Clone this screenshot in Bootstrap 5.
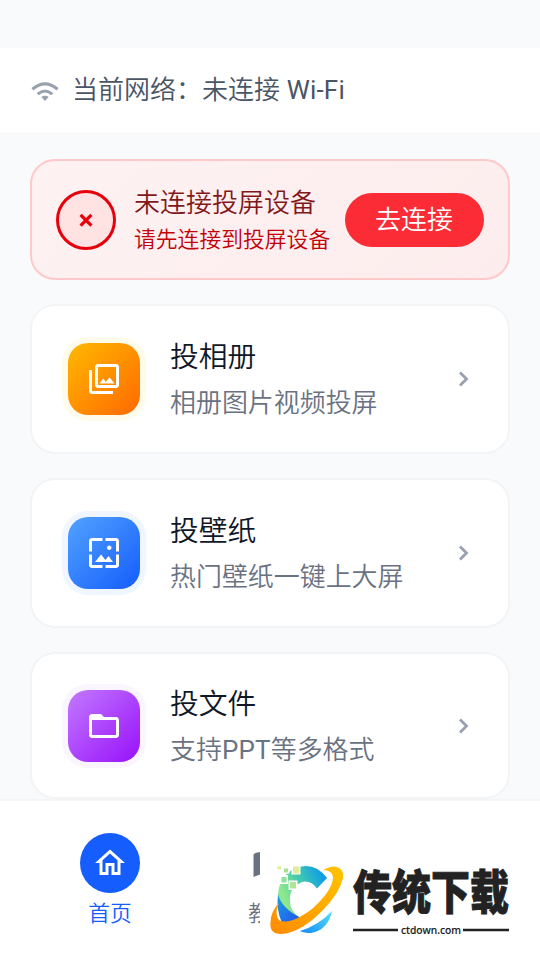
<!DOCTYPE html>
<html lang="zh-CN">
<head>
<meta charset="utf-8">
<meta name="viewport" content="width=device-width, initial-scale=1">
<title>投屏</title>
<link href="https://cdn.jsdelivr.net/npm/bootstrap@5.3.0/dist/css/bootstrap.min.css" rel="stylesheet">
<style>
body{font-family:"Noto Sans CJK SC",sans-serif;font-weight:350;background:#f9fafc;height:960px;overflow:hidden;letter-spacing:0}
.latin{font-family:Roboto,sans-serif;font-weight:400;letter-spacing:.2px}
.net-bar{margin-top:48px;height:86px;padding-left:29px;background:#fff;border-bottom:1px solid #f3f4f6;color:#4a5565;font-size:26px;line-height:1}
.net-bar span.net-name{margin-left:11px;padding-bottom:3px}
.page-main{padding:25px 30px 0;height:665px}
.device{height:121px;border:2px solid #ffc9c9;border-radius:25px;background:linear-gradient(135deg,#fef2f2,#fceced);padding:0 24px}
.ring-x{width:60px;height:60px;border:3px solid #e7000b;background:#ffe2e2;margin-right:18px}
.t-a{font-size:26px;line-height:36px;color:#82181a}
.t-b{font-size:21.8px;line-height:38px;color:#c10007;white-space:nowrap}
.go{width:139px;height:54px;background:#fb2c36;color:#fff;font-size:26px;line-height:1;font-weight:350;padding:0 1px 3px 0}
.entry{height:150px;border:2px solid #f3f4f6;border-radius:25px;padding:0 29px 0 36px;margin-top:24px;background:#fff}
.entry.short{height:147px}
.tile{width:72px;height:72px;border-radius:20px;color:#fff;margin-right:30px}
.amber{background:linear-gradient(135deg,#ffb900,#ff6900);box-shadow:0 0 0 6px #fffbeb}
.blue{background:linear-gradient(135deg,#51a2ff,#155dfc);box-shadow:0 0 0 6px #eff6ff}
.violet{background:linear-gradient(135deg,#c27aff,#9810fa);box-shadow:0 0 0 6px #faf5ff}
.t-c{font-size:28.8px;line-height:46px;color:#101828}
.t-d{font-size:25.95px;line-height:46px;color:#6a7282}
.entry .flex-grow-1{padding-bottom:2px}
.entry.short .flex-grow-1{padding:1px 0 0}
.tabs{height:161px;background:#fff;border-top:2px solid #f3f4f6;padding-top:32px}
.tab-i{width:220px;font-size:21.8px;line-height:38px;color:#155dfc}
.tab-dot{width:60px;height:60px;background:#155dfc}
.tab-cut{width:40px;overflow:hidden;color:#6a7282;font-size:21.8px;line-height:38px;white-space:nowrap}
.tab-cut span{margin-left:28px}
</style>
</head>
<body class="d-flex flex-column">
<header class="net-bar d-flex align-items-center flex-shrink-0">
  <svg width="32" height="32" viewBox="0 0 32 32" fill="none" stroke="#99a1af" stroke-width="3.1"><path d="M3.4 14.2Q16 3.6 28.6 14.2M8.7 19.2Q16 12.8 23.3 19.2"/><path d="M12.3 22.1Q16 19.3 19.7 22.1L16 26z" fill="#99a1af" stroke="none"/></svg>
  <span class="net-name">当前网络：未连接<span class="latin"> Wi-Fi</span></span>
</header>
<main class="page-main flex-shrink-0">
  <section class="device d-flex align-items-center">
    <div class="ring-x rounded-circle d-flex align-items-center justify-content-center flex-shrink-0">
      <svg width="16" height="16" viewBox="0 0 16 16" stroke="#e7000b" stroke-width="3.2"><path d="M2.6 2.8l10.8 10.8M13.4 2.8L2.6 13.6"/></svg>
    </div>
    <div class="flex-grow-1"><div class="t-a">未连接投屏设备</div><div class="t-b">请先连接到投屏设备</div></div>
    <button class="btn go rounded-pill border-0 flex-shrink-0">去连接</button>
  </section>
  <section class="entry d-flex align-items-center">
    <div class="tile amber d-flex align-items-center justify-content-center flex-shrink-0"><svg width="36" height="36" viewBox="0 0 24 24" fill="currentColor"><path d="M20 4v12H8V4h12m0-2H8c-1.100 0-2 .9-2 2v12c0 1.100.9 2 2 2h12c1.100 0 2-.9 2-2V4c0-1.100-.9-2-2-2zm-8.500 9.670l1.690 2.260 2.480-3.100L19 15H9zM2 6v14c0 1.100.9 2 2 2h14v-2H4V6H2z"/></svg></div>
    <div class="flex-grow-1"><div class="t-c">投相册</div><div class="t-d">相册图片视频投屏</div></div>
    <svg width="30" height="30" viewBox="0 0 30 30" fill="none" stroke="#99a1af" stroke-width="2.800"><path d="M11 8.500L17.500 15 11 21.500"/></svg>
  </section>
  <section class="entry d-flex align-items-center">
    <div class="tile blue d-flex align-items-center justify-content-center flex-shrink-0"><svg width="36" height="36" viewBox="0 0 24 24" fill="currentColor"><path d="M4 4h7V2H4c-1.100 0-2 .9-2 2v7h2V4zm6 9l-4 5h12l-3-4-2.030 2.710L10 13zm7-4.500c0-.83-.67-1.500-1.500-1.500S14 7.670 14 8.500s.67 1.500 1.500 1.500S17 9.330 17 8.500zM20 2h-7v2h7v7h2V4c0-1.100-.9-2-2-2zm0 18h-7v2h7c1.100 0 2-.9 2-2v-7h-2v7zM4 13H2v7c0 1.100.9 2 2 2h7v-2H4v-7z"/></svg></div>
    <div class="flex-grow-1"><div class="t-c">投壁纸</div><div class="t-d">热门壁纸一键上大屏</div></div>
    <svg width="30" height="30" viewBox="0 0 30 30" fill="none" stroke="#99a1af" stroke-width="2.800"><path d="M11 8.500L17.500 15 11 21.500"/></svg>
  </section>
  <section class="entry short d-flex align-items-center">
    <div class="tile violet d-flex align-items-center justify-content-center flex-shrink-0"><svg width="36" height="36" viewBox="0 0 24 24" fill="currentColor"><path d="M20 6h-8l-2-2H4c-1.100 0-1.990.9-1.990 2L2 18c0 1.100.9 2 2 2h16c1.100 0 2-.9 2-2V8c0-1.100-.9-2-2-2zm0 12H4V8h16v10z"/></svg></div>
    <div class="flex-grow-1"><div class="t-c">投文件</div><div class="t-d">支持<span class="latin">PPT</span>等多格式</div></div>
    <svg width="30" height="30" viewBox="0 0 30 30" fill="none" stroke="#99a1af" stroke-width="2.800"><path d="M11 8.500L17.500 15 11 21.500"/></svg>
  </section>
</main>
<footer class="tabs d-flex flex-shrink-0">
  <div class="tab-i d-flex flex-column align-items-center">
    <div class="tab-dot rounded-circle d-flex align-items-center justify-content-center"><svg width="36" height="36" viewBox="0 0 24 24"><path fill="#fff" d="M12 5.690l5 4.500V18h-2v-6H9v6H7v-7.810l5-4.500M12 3L2 12h3v8h6v-6h2v6h6v-8h3L12 3z"/></svg></div>
    <div>首页</div>
  </div>
  <div class="tab-cut">
    <svg class="d-block" width="40" height="60" viewBox="0 0 40 60"><path d="M33.500 21.500Q34 20 40 19v22.500L33.500 44z" fill="#6a7282"/></svg>
    <span>教程</span>
  </div>
  <svg class="flex-shrink-0" width="280" height="127" viewBox="260 833 280 127">
    <defs>
      <linearGradient id="orbit" x1="0" y1="1" x2="1" y2="0"><stop stop-color="#ff8a00"/><stop offset="1" stop-color="#ffc400"/></linearGradient>
      <linearGradient id="arc" gradientUnits="userSpaceOnUse" x1="283" y1="893" x2="326" y2="875"><stop stop-color="#8ce78e"/><stop offset=".45" stop-color="#40c8b0"/><stop offset="1" stop-color="#0998ee"/></linearGradient>
      <linearGradient id="deep" x1="0" y1="0" x2="1" y2="1"><stop stop-color="#1a9fe0"/><stop offset="1" stop-color="#2450f0"/></linearGradient>
      <linearGradient id="tail" x1="0" y1="1" x2="1" y2="0"><stop stop-color="#168bf3"/><stop offset="1" stop-color="#55e0ff"/></linearGradient>
    </defs>
    <path d="M278 898Q278 880 289 872Q297 866 306 866Q318 866 327 878L317 888.500Q311 880 302 882Q289 887 290 901Q290 911 300 918L292 922Q277 913 278 898z" fill="url(#arc)"/>
    <path d="M278 894Q281 908 301 918L294 923H282Q276 910 278 894z" fill="url(#deep)"/>
    <path d="M300 931Q319 925 332 911Q328 930 311 933Q304 933 300 931z" fill="url(#tail)"/>
    <path d="M323 870Q332 865 337 867Q344 869 343 878Q340 892 324 909Q301 933 281 934Q269 934 270.500 922Q271 911 279 903Q274 915 279 920Q289 926 312 909Q333 890 333 877Q332 870 323 870z" fill="url(#orbit)"/>
    <g fill="#fff"><path d="M291.500 864.500h9v10h-9zM288.500 880.500h9v9.500h-9zM280 875h8v9h-8zM283 867h6.500v6.500H283z"/></g>
    <path d="M293 866.500h6v7h-6z" fill="#dfed9b"/><path d="M290 882h6v6.500h-6z" fill="#aee695"/><path d="M281.500 877h5v5.500h-5z" fill="#8ee295"/><path d="M284 868.500h4v4H284z" fill="#a8e38c"/><path d="M277.500 866h3.500v3.500h-3.500z" fill="#e5ef9e"/>
    <text transform="translate(353 909) scale(1 1.190)" font-family="Noto Sans CJK SC, sans-serif" font-size="39" font-weight="900" fill="#222" stroke="#222" stroke-width=".7">传统下载</text>
    <path d="M353 930h45M463 930h46" stroke="#222" stroke-width="2.400"/>
    <text x="401" y="934" textLength="60" lengthAdjust="spacingAndGlyphs" font-family="Noto Sans, sans-serif" font-size="10.500" font-weight="500" fill="#222" stroke="#222" stroke-width=".15">ctdown.com</text>
  </svg>
</footer>
<script src="https://cdn.jsdelivr.net/npm/bootstrap@5.3.0/dist/js/bootstrap.bundle.min.js"></script>
</body>
</html>
